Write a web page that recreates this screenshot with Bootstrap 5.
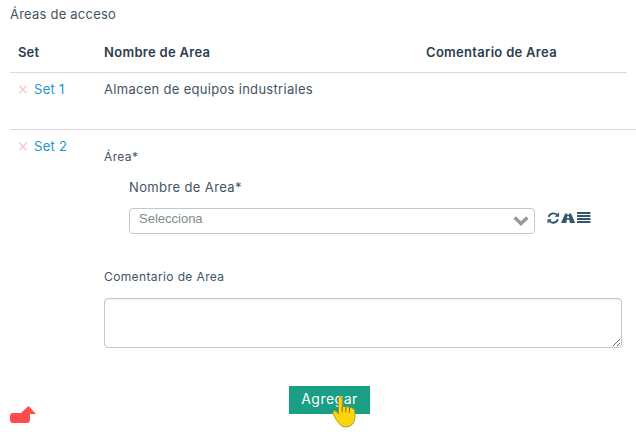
<!DOCTYPE html>
<html lang="es">
<head>
<meta charset="utf-8">
<meta name="viewport" content="width=device-width, initial-scale=1">
<title>Áreas de acceso</title>
<link href="https://cdn.jsdelivr.net/npm/bootstrap@5.3.0/dist/css/bootstrap.min.css" rel="stylesheet">
<style>
html, body { height: 100%; overflow: hidden; }
body { font-family: Inter, "Open Sans", sans-serif; font-size: 13px; line-height: 20px; color: #435463; background: #fff; }
.areas { padding: 4px 0 0 10px; height: 432px; }
.areas-title { letter-spacing: .22px; }
.set-row { display: grid; grid-template-columns: 86px 322px 1fr; padding-left: 8px; }
.set-head { height: 49px; margin-right: 9px; padding-top: 18px; border-bottom: 1px solid #d9dbdc; color: #2c3e50; font-weight: 600; letter-spacing: .12px; }
.set-head div + div { letter-spacing: .3px; }
.set-one { height: 57px; padding-top: 6px; border-bottom: 1px solid #d5d7d8; letter-spacing: .3px; }
.set-two { grid-template-columns: 86px 1fr; padding-top: 6px; letter-spacing: .3px; }
.set-link { color: #1c94d2; text-decoration: none; }
.remove-icon { width: 10px; height: 10px; margin-right: 6px; }
.field-label { font-size: 12px; letter-spacing: .38px; }
.area-label { margin-top: 11px; }
.inner-field { padding: 10px 0 0 25px; letter-spacing: .38px; }
.select-line { margin-top: 11px; }
.combo { width: 406px; height: 26px; border: 1px solid #c4c6c7; border-radius: 4px; padding: 0 5px 0 9px; color: #7f8c8d; font: 13px/20px "Liberation Sans", Arial, sans-serif; letter-spacing: 0; }
.tools { margin-left: 12px; color: #34566b; }
.comment-label { margin-top: 33px; }
.comment { width: 518px; height: 50px; min-height: 0; margin-top: 11px; border: 1px solid #c4c6c7; border-radius: 4px; padding: 4px; box-shadow: inset 0 1px 1px rgba(0,0,0,.06); }
.add-wrap { padding-left: 279px; margin-top: 38px; }
.btn-add, .btn-add:hover { width: 81px; height: 28px; padding: 0 0 3px; border: 0; border-radius: 0; background: #1a9f85; color: #fff; font-size: 14px; line-height: 25px; letter-spacing: .5px; }
.pointer { left: 42px; top: 10px; }
.flag { left: 10px; top: 406px; }
</style>
</head>
<body class="position-relative">
<main class="areas">
  <div class="areas-title">Áreas de acceso</div>
  <div class="set-row set-head"><div>Set</div><div>Nombre de Area</div><div>Comentario de Area</div></div>
  <div class="set-row set-one">
    <div class="d-flex align-items-center align-self-start"><svg class="remove-icon" viewBox="0 0 10 10"><path d="M1.3 1.8l7.4 7.4M8.7 1.8l-7.4 7.4" stroke="#facbc8" stroke-width="1.6"/></svg><a class="set-link" href="#">Set 1</a></div>
    <div>Almacen de equipos industriales</div>
  </div>
  <div class="set-row set-two">
    <div class="d-flex align-items-center align-self-start"><svg class="remove-icon" viewBox="0 0 10 10"><path d="M1.3 1.8l7.4 7.4M8.7 1.8l-7.4 7.4" stroke="#facbc8" stroke-width="1.6"/></svg><a class="set-link" href="#">Set 2</a></div>
    <div>
      <div class="field-label area-label">Área*</div>
      <div class="inner-field">
        <div>Nombre de Area*</div>
        <div class="d-flex select-line">
          <div class="combo d-flex justify-content-between"><span>Selecciona</span>
            <svg class="mt-1" width="16" height="16" viewBox="0 0 16 16"><path d="M1.6 4.4l6.4 6.2 6.4-6.2" fill="none" stroke="#999" stroke-width="3.5"/></svg></div>
          <div class="tools d-flex">
            <svg width="46" height="20" viewBox="0 0 46 20"><g fill="none" stroke="currentColor" stroke-width="1.9"><path d="M1.7 8.9A4.8 4.3 0 0 1 10 6.9M10.8 11.2a4.8 4.3 0 0 1-8.3 2"/></g><path d="M12.1 4.3v4.4H7.6zM.5 15.6v-4.4h4.5z" fill="currentColor"/><path d="M18.2 5.5h2.3L20.3 7h1.6l-.2-1.5H24L28.2 15h-5.4l-.4-3.3h-2.6l-.4 3.3H14zM20.2 8.3l-.2 2h2.2l-.2-2z" fill="currentColor" fill-rule="evenodd"/><path d="M30 4h13.5v2H30zm0 3h13.5v2H30zm0 3h13.5v2H30zm0 3h13.5v2H30z" fill="currentColor"/></svg>
          </div>
        </div>
      </div>
      <label class="field-label comment-label d-block" for="comentario">Comentario de Area</label>
      <textarea id="comentario" class="comment d-block"></textarea>
    </div>
  </div>
  <div class="add-wrap"><button type="button" class="btn btn-add position-relative d-block">Agregar
    <svg class="pointer position-absolute" width="26" height="32" viewBox="0 0 26 32"><path d="M7.5 18V2.5Q7.7.8 9.3.8T11.2 2.5V11Q12.4 9.4 14.7 11.2 16.5 9.6 18.4 12 20.4 10.7 21.9 12.6 23.9 13 23.9 16V22Q23.7 26 21.8 27.8 19.5 31 14.8 31 10.5 31 8 27.5 4.8 23.5 2 17.7 1.5 15.2 3.6 14.6 5.5 14.8 7.5 18z" fill="#fdd50d" stroke="#a5852b" stroke-width=".8"/><path d="M11.2 11v5.2M14.8 11.3v5M18.5 12v4.7" stroke="#836b25" fill="none"/></svg></button></div>
</main>
<svg class="flag position-absolute" width="27" height="18" viewBox="0 0 27 18"><path d="M3 7h8l7.5-7L26 8h-6v6q0 3-3 3H3q-3 0-3-3v-4q0-3 3-3z" fill="#ff4b4c"/></svg>
<script src="https://cdn.jsdelivr.net/npm/bootstrap@5.3.0/dist/js/bootstrap.bundle.min.js"></script>
</body>
</html>
